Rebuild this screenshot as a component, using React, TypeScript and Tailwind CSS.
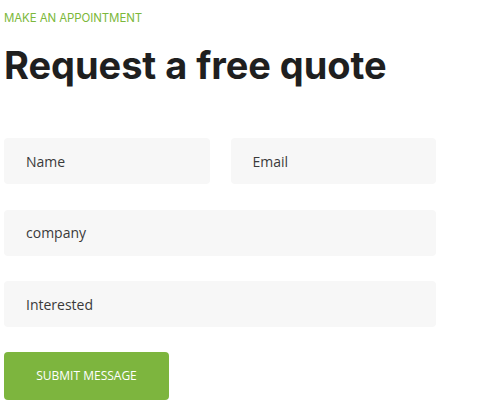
import React from "react";

export default function App() {
  const field =
    "h-[46px] rounded-[4px] bg-[#f7f7f7] flex items-center pl-[22px] text-[14px] text-[#3a3a3a]";
  return (
    <div className="w-[480px] h-[407px] bg-white pl-[4px] pt-[11px] font-['Inter',sans-serif]">
      <div className="text-[11.5px] leading-[14px] text-[#7cb83b] tracking-[-0.1px]">
        MAKE AN APPOINTMENT
      </div>
      <h1 className="mt-[18px] text-[38px] leading-[44px] font-bold text-[#1f1f1f] tracking-[-0.05px]">
        Request a free quote
      </h1>
      <div className="mt-[51px] w-[432px] flex flex-col gap-[25.5px] font-['Open_Sans',sans-serif]">
        <div className="grid grid-cols-2 gap-[21px]">
          <div className={field}>Name</div>
          <div className={field}>Email</div>
        </div>
        <div className={field}>company</div>
        <div className={field}>Interested</div>
      </div>
      <button className="mt-[25px] w-[165px] h-[48px] rounded-[4px] bg-[#7db53e] text-white text-[12px] font-['Open_Sans',sans-serif] flex items-center justify-center">
        SUBMIT MESSAGE
      </button>
    </div>
  );
}
